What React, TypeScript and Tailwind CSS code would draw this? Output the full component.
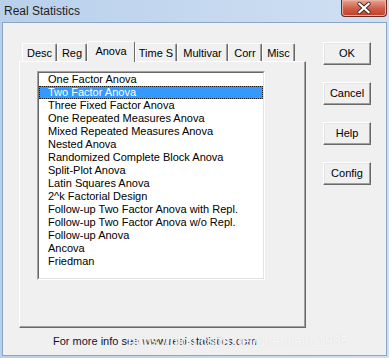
import React from "react";

const items = [
  "One Factor Anova",
  "Two Factor Anova",
  "Three Fixed Factor Anova",
  "One Repeated Measures Anova",
  "Mixed Repeated Measures Anova",
  "Nested Anova",
  "Randomized Complete Block Anova",
  "Split-Plot Anova",
  "Latin Squares Anova",
  "2^k Factorial Design",
  "Follow-up Two Factor Anova with Repl.",
  "Follow-up Two Factor Anova w/o Repl.",
  "Follow-up Anova",
  "Ancova",
  "Friedman",
];

const tabs = [
  { label: "Desc", w: "w-[35px]" },
  { label: "Reg", w: "w-[30px]" },
  { label: "Anova", w: "w-[48px]", active: true },
  { label: "Time S", w: "w-[42px]" },
  { label: "Multivar", w: "w-[51px]" },
  { label: "Corr", w: "w-[34px]" },
  { label: "Misc", w: "w-[33px]" },
];

const Tab = ({ label, w, active }: { label: string; w: string; active?: boolean }) => {
  if (active) {
    return (
      <div
        className={`${w} relative z-10 -mb-px flex h-[21px] justify-center rounded-t-[2px] border-l border-t border-r border-l-white border-t-white border-r-[#696969] bg-[#f0f0f0] pt-[2px] leading-[14px]`}
      >
        {label}
      </div>
    );
  }
  return (
    <div
      className={`${w} flex h-[18px] items-center justify-center rounded-t-[2px] border-l border-t border-r border-l-white border-t-white border-r-[#696969] shadow-[inset_-1px_0_0_#a0a0a0] leading-[14px]`}
    >
      {label}
    </div>
  );
};

const DlgButton = ({ children }: { children: React.ReactNode }) => (
  <div className="flex h-[23px] w-[48px] items-center justify-center border border-l-white border-t-white border-r-[#696969] border-b-[#696969] bg-[#f0f0f0] shadow-[inset_-1px_-1px_0_#a0a0a0,inset_1px_1px_0_#e3e3e3]">
    {children}
  </div>
);

export default function App() {
  return (
    <div
      className="relative h-[358px] w-[389px] overflow-hidden bg-gradient-to-r from-[#b9d0eb] to-[#cfe0f3] text-[11px] text-black"
      style={{ fontFamily: '"Liberation Sans", Arial, sans-serif' }}
    >
      {/* title bar */}
      <div className="flex h-[21px] items-center pl-[4px] text-[12px] text-[#1e1e1e]">
        Real Statistics
      </div>
      <div className="absolute right-[2px] top-0 h-[17px] w-[46px] overflow-hidden rounded-b-[4px] border border-t-0 border-[#6e2a22] bg-gradient-to-b from-[#e8a493] via-[#d0614c] to-[#c23a25] shadow-[inset_0_0_0_1px_#eab0a4]">
        <svg viewBox="0 0 46 17" className="h-full w-full">
          <path
            d="M18 4 L28 13 M28 4 L18 13"
            stroke="#3a2a28"
            strokeWidth="4.2"
            strokeLinecap="round"
          />
          <path
            d="M18 4 L28 13 M28 4 L18 13"
            stroke="#ffffff"
            strokeWidth="2.4"
            strokeLinecap="round"
          />
        </svg>
      </div>

      {/* client area */}
      <div className="ml-[2px] mt-px h-[334px] w-[385px] border border-[#8ba5c4] bg-[#f0f0f0]">
        <div className="flex pl-[16px] pt-[18px]">
          {/* tab control */}
          <div className="w-[287px]">
            <div className="flex h-[20px] items-end pl-[3px]">
              {tabs.map((t) => (
                <Tab key={t.label} {...t} />
              ))}
            </div>
            <div className="h-[267px] border border-l-white border-t-white border-r-[#696969] border-b-[#696969] shadow-[inset_-1px_-1px_0_#a0a0a0]">
              <div className="ml-[17px] mt-[9px] h-[209px] w-[228px] border border-l-[#a0a0a0] border-t-[#a0a0a0] border-r-white border-b-white">
                <div className="h-full w-full border border-l-[#696969] border-t-[#696969] border-r-[#e3e3e3] border-b-[#e3e3e3] bg-white">
                  {items.map((it, i) =>
                    i === 1 ? (
                      <div
                        key={it}
                        className="h-[13px] whitespace-nowrap bg-[#3399ff] pl-[9px] leading-[13px] text-white outline-1 -outline-offset-1 outline-dotted outline-[#1a1a1a]"
                      >
                        {it}
                      </div>
                    ) : (
                      <div key={it} className="h-[13px] whitespace-nowrap pl-[9px] leading-[13px]">
                        {it}
                      </div>
                    )
                  )}
                </div>
              </div>
            </div>
          </div>

          {/* buttons */}
          <div className="ml-[17px] mt-[1px] flex flex-col gap-[17px]">
            <DlgButton>OK</DlgButton>
            <DlgButton>Cancel</DlgButton>
            <DlgButton>Help</DlgButton>
            <DlgButton>Config</DlgButton>
          </div>
        </div>

        <div className="mt-[6px] h-[14px] pl-[50px] leading-[14px] text-[#101030]">
          For more info see www.real-statistics.com
        </div>
      </div>

      {/* watermark */}
      <div className="absolute left-[128px] top-[333px] text-[14px] leading-[16px] text-white/80 [text-shadow:0_0_1px_#d0d0d0]">
        https://blog.csdn.net/shenliang1985
      </div>
    </div>
  );
}
